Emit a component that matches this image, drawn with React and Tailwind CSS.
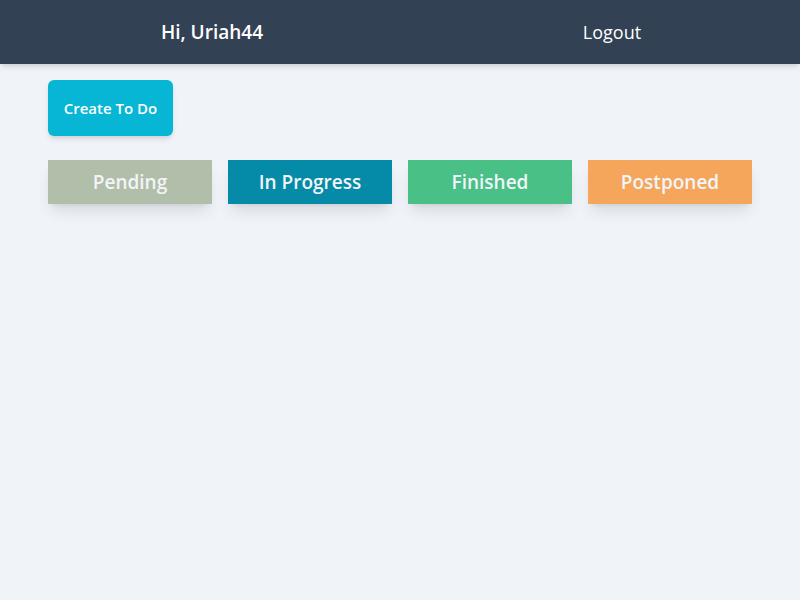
import React from "react";

export default function App() {
  const statuses = [
    { label: "Pending", cls: "bg-[#b1bea9]" },
    { label: "In Progress", cls: "bg-[#058aa8]" },
    { label: "Finished", cls: "bg-[#48c086]" },
    { label: "Postponed", cls: "bg-[#f5a65b]" },
  ];
  return (
    <div
      className="min-h-[600px] bg-[#f0f3f8]"
      style={{ fontFamily: '"Open Sans", "Noto Sans", sans-serif' }}
    >
      <header className="flex h-16 items-center bg-[#334155] text-white shadow-md">
        <div className="flex flex-1 justify-center pl-6 text-[19px] font-semibold">Hi, Uriah44</div>
        <div className="flex flex-1 justify-center pl-6 text-lg">Logout</div>
      </header>
      <main className="px-12 pt-4">
        <button className="flex h-14 w-[125px] items-center justify-center rounded-md bg-[#06b6d4] text-[15px] font-semibold text-white shadow-md">
          Create To Do
        </button>
        <div className="mt-6 grid grid-cols-4 gap-4">
          {statuses.map((s) => (
            <div
              key={s.label}
              className={`flex h-11 items-center justify-center text-[19px] font-semibold text-[#f1f5f9] shadow-lg ${s.cls}`}
            >
              {s.label}
            </div>
          ))}
        </div>
      </main>
    </div>
  );
}
